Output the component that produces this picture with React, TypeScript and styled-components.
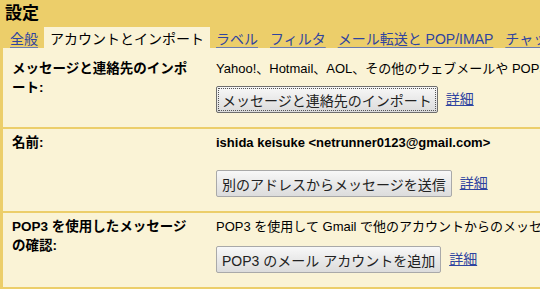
import React from 'react'
import styled, { createGlobalStyle } from 'styled-components'

const Global = createGlobalStyle`
    html, body {
        margin: 0;
        padding: 0;
        background: #ecce6a;
        overflow: hidden;
    }
    body {
        font-family: "Liberation Sans", Arial, "Noto Sans CJK JP", sans-serif;
        color: #000;
    }
`

const Page = styled.div`
    width: 540px;
    height: 289px;
    display: flex;
    flex-direction: column;
    background: #ecce6a;
`

const Title = styled.h1`
    margin: 0;
    height: 27px;
    padding-left: 5px;
    font-size: 17px;
    font-weight: bold;
    line-height: 27px;
    white-space: nowrap;
`

const TabBar = styled.div`
    display: flex;
    align-items: stretch;
    height: 21px;
    padding-left: 4px;
    white-space: nowrap;
`

const Tab = styled.a<{ $active?: boolean }>`
    display: flex;
    align-items: center;
    padding: 0 6px;
    font-size: 14px;
    color: ${props => props.$active ? '#000' : '#2f44a0'};
    background: ${props => props.$active ? '#faf3d6' : 'transparent'};
    text-decoration: ${props => props.$active ? 'none' : 'underline'};
    text-decoration-color: #6a7bb0;
    text-decoration-thickness: 2px;
    text-underline-offset: 3px;
    cursor: pointer;
`

const Content = styled.div`
    flex: 1;
    background: #faf3d6;
    border-left: 3px solid #ecce6a;
    padding-top: 7px;
`

const Row = styled.div<{ $last?: boolean }>`
    display: grid;
    grid-template-columns: 204px 1fr;
    padding: 4px 0 14px 9px;
    border-bottom: 2px solid #ecce6a;
`

const Label = styled.div`
    font-size: 13.5px;
    font-weight: bold;
    line-height: 19px;
`

const Value = styled.div`
    min-width: 0;
    font-size: 13px;
    line-height: 19px;
    white-space: nowrap;
`

const Strong = styled.span`
    font-weight: bold;
`

const Actions = styled.div<{ $top: number }>`
    display: flex;
    align-items: center;
    gap: 8px;
    margin-top: ${props => props.$top}px;
`

const Button = styled.button<{ $focused?: boolean }>`
    height: 27px;
    padding: 0 5px;
    font-family: "Liberation Sans", Arial, "Noto Sans CJK JP", sans-serif;
    font-size: 14px;
    color: #222;
    white-space: nowrap;
    border: 1px solid ${props => props.$focused ? '#6e6e6e' : '#a9a9a9'};
    border-radius: 2px;
    background: linear-gradient(#f8f8f8, #e9e9e9 50%, #dcdcdc);
    outline: ${props => props.$focused ? '1px dotted #555' : 'none'};
    outline-offset: -3px;
`

const More = styled.a`
    font-size: 14px;
    color: #2f44a0;
    text-decoration: underline;
    cursor: pointer;
`

const tabs = ['全般', 'アカウントとインポート', 'ラベル', 'フィルタ', 'メール転送と POP/IMAP', 'チャット']

const App: React.FC = () => {
    return (
        <Page>
            <Global />
            <Title>設定</Title>
            <TabBar>
                {tabs.map(t => (
                    <Tab key={t} $active={t === 'アカウントとインポート'}>{t}</Tab>
                ))}
            </TabBar>
            <Content>
                <Row>
                    <Label>メッセージと連絡先のインポ<br />ート:</Label>
                    <Value>
                        Yahoo!、Hotmail、AOL、その他のウェブメールや POP3 アカウントからインポートします。
                        <Actions $top={8}>
                            <Button $focused>メッセージと連絡先のインポート</Button>
                            <More>詳細</More>
                        </Actions>
                    </Value>
                </Row>
                <Row>
                    <Label>名前:</Label>
                    <Value>
                        <Strong>ishida keisuke &lt;netrunner0123@gmail.com&gt;</Strong>
                        <Actions $top={18}>
                            <Button>別のアドレスからメッセージを送信</Button>
                            <More>詳細</More>
                        </Actions>
                    </Value>
                </Row>
                <Row>
                    <Label>POP3 を使用したメッセージ<br />の確認:</Label>
                    <Value>
                        POP3 を使用して Gmail で他のアカウントからのメッセージを取得します。
                        <Actions $top={10}>
                            <Button>POP3 のメール アカウントを追加</Button>
                            <More>詳細</More>
                        </Actions>
                    </Value>
                </Row>
            </Content>
        </Page>
    )
}

export default App
